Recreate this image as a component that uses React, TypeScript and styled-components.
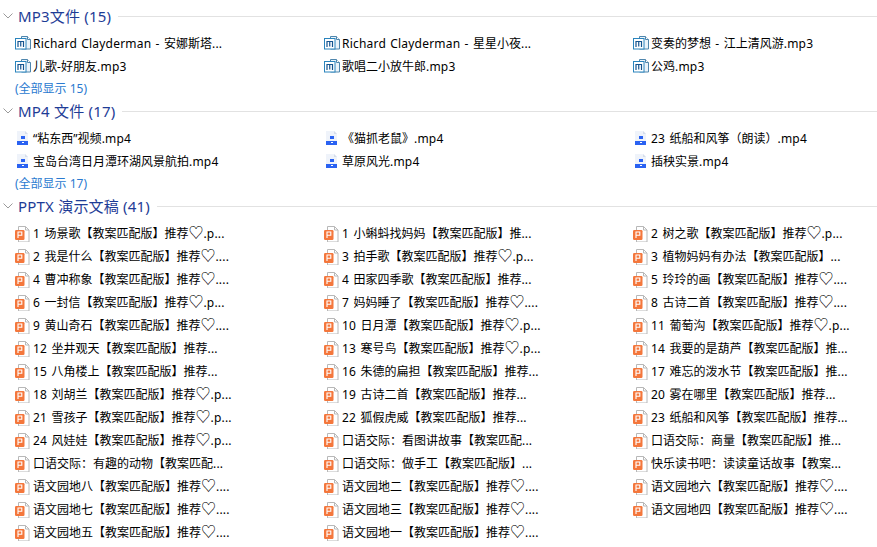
import styled, { createGlobalStyle } from "styled-components";

const mp3Files = [
  "Richard Clayderman - 安娜斯塔...",
  "Richard Clayderman - 星星小夜...",
  "变奏的梦想 - 江上清风游.mp3",
  "儿歌-好朋友.mp3",
  "歌唱二小放牛郎.mp3",
  "公鸡.mp3",
];

const mp4Files = [
  "“粘东西”视频.mp4",
  "《猫抓老鼠》.mp4",
  "23 纸船和风筝（朗读）.mp4",
  "宝岛台湾日月潭环湖风景航拍.mp4",
  "草原风光.mp4",
  "插秧实景.mp4",
];

const pptxFiles = [
  "1 场景歌【教案匹配版】推荐♡.p...",
  "1 小蝌蚪找妈妈【教案匹配版】推...",
  "2 树之歌【教案匹配版】推荐♡.p...",
  "2 我是什么【教案匹配版】推荐♡....",
  "3 拍手歌【教案匹配版】推荐♡.p...",
  "3 植物妈妈有办法【教案匹配版】...",
  "4 曹冲称象【教案匹配版】推荐♡....",
  "4 田家四季歌【教案匹配版】推荐...",
  "5 玲玲的画【教案匹配版】推荐♡....",
  "6 一封信【教案匹配版】推荐♡.p...",
  "7 妈妈睡了【教案匹配版】推荐♡....",
  "8 古诗二首【教案匹配版】推荐♡....",
  "9 黄山奇石【教案匹配版】推荐♡....",
  "10 日月潭【教案匹配版】推荐♡.p...",
  "11 葡萄沟【教案匹配版】推荐♡.p...",
  "12 坐井观天【教案匹配版】推荐...",
  "13 寒号鸟【教案匹配版】推荐♡.p...",
  "14 我要的是葫芦【教案匹配版】推...",
  "15 八角楼上【教案匹配版】推荐...",
  "16 朱德的扁担【教案匹配版】推荐...",
  "17 难忘的泼水节【教案匹配版】推...",
  "18 刘胡兰【教案匹配版】推荐♡.p...",
  "19 古诗二首【教案匹配版】推荐...",
  "20 雾在哪里【教案匹配版】推荐...",
  "21 雪孩子【教案匹配版】推荐♡.p...",
  "22 狐假虎威【教案匹配版】推荐...",
  "23 纸船和风筝【教案匹配版】推荐...",
  "24 风娃娃【教案匹配版】推荐♡.p...",
  "口语交际：看图讲故事【教案匹配...",
  "口语交际：商量【教案匹配版】推...",
  "口语交际：有趣的动物【教案匹配...",
  "口语交际：做手工【教案匹配版】...",
  "快乐读书吧：读读童话故事【教案...",
  "语文园地八【教案匹配版】推荐♡....",
  "语文园地二【教案匹配版】推荐♡....",
  "语文园地六【教案匹配版】推荐♡....",
  "语文园地七【教案匹配版】推荐♡....",
  "语文园地三【教案匹配版】推荐♡....",
  "语文园地四【教案匹配版】推荐♡....",
  "语文园地五【教案匹配版】推荐♡....",
  "语文园地一【教案匹配版】推荐♡....",
];

type FileKind = "mp3" | "mp4" | "pptx";

const FileIcon = ({ kind }: { kind: FileKind }) => {
  if (kind === "mp3") {
    return (
      <svg width="18" height="18" viewBox="0 0 18 18">
        <path d="M6.500 2.500h6l3 3v9.500h-9z" fill="#eaf3fa" stroke="#4f86ad" />
        <path d="M12.500 2.500v3h3" fill="#fff" stroke="#4f86ad" />
        <rect x="0.500" y="4.500" width="10.500" height="10.500" fill="#fff" stroke="#2a84bd" />
        <path d="M3 13v-5.500h5.500v5.500M5.750 7.500v5" fill="none" stroke="#14548f" strokeWidth="1.200" />
      </svg>
    );
  }
  if (kind === "mp4") {
    return (
      <svg width="18" height="18" viewBox="0 0 18 18">
        <path d="M2 2h8l3 3v11h-11z" fill="#eff3fa" />
        <path d="M10 2v3h3z" fill="#d6deeb" />
        <rect x="6" y="7" width="4" height="3" fill="#2a62f2" />
        <rect x="2" y="12" width="11" height="4" fill="#2a62f2" />
        <rect x="7" y="13" width="2" height="1" fill="#fff" />
      </svg>
    );
  }
  return (
    <svg width="18" height="18" viewBox="0 0 18 18">
      <path d="M3.500 2.500h7l3.500 3.500v12h-10.500z" fill="#fff" stroke="#b8b8b8" />
      <path d="M10.500 2.500v3.500h3.500" fill="none" stroke="#b8b8b8" />
      <rect x="0" y="6" width="9.500" height="10" rx="1.200" fill="#f4773c" />
      <path d="M3 14v-6h3.800v3.200h-3.800" fill="none" stroke="#fff" strokeWidth="1.100" />
    </svg>
  );
};

const Chevron = () => (
  <svg width="10" height="6" viewBox="0 0 10 6">
    <path d="M0.5 0.5l4.5 4.5 4.5-4.5" fill="none" stroke="#9a9a9a" />
  </svg>
);

// 라틴 문자와 하트만 폭이 달라서 조각으로 나눠 렌더링
const renderName = (name: string) =>
  name.split(/(♡|[A-Za-z0-9 .\-]+)/).map((part, i) => {
    if (!part) return null;
    if (part === "♡") return <Heart key={i}>♡</Heart>;
    if (/^[A-Za-z0-9 .\-]+$/.test(part)) return <Latin key={i}>{part}</Latin>;
    return part;
  });

interface SectionProps {
  title: string;
  kind: FileKind;
  files: string[];
  showAll?: number;
}

const Section = ({ title, kind, files, showAll }: SectionProps) => (
  <section>
    <Header>
      <Chevron />
      <Title>{title}</Title>
      <Rule />
    </Header>
    <FileGrid>
      {files.map((name) => (
        <FileItem key={name}>
          <IconSlot>
            <FileIcon kind={kind} />
          </IconSlot>
          <FileName>{renderName(name)}</FileName>
        </FileItem>
      ))}
    </FileGrid>
    {showAll && <ShowAll>(全部显示 {showAll})</ShowAll>}
  </section>
);

const App = () => (
  <>
    <GlobalStyle />
    <Page>
      <Section title="MP3文件 (15)" kind="mp3" files={mp3Files} showAll={15} />
      <Section title="MP4 文件 (17)" kind="mp4" files={mp4Files} showAll={17} />
      <Section title="PPTX 演示文稿 (41)" kind="pptx" files={pptxFiles} />
    </Page>
  </>
);

export default App;

const GlobalStyle = createGlobalStyle`
  html, body {
    margin: 0;
    background: #fff;
  }
`;

const Page = styled.div`
  height: 547px;
  overflow: hidden;
  padding-top: 4px;
  box-sizing: border-box;
  font-family: "Noto Sans", "Noto Sans CJK SC", sans-serif;
`;

const Header = styled.div`
  display: flex;
  align-items: center;
  height: 24px;
  padding-left: 3px;
`;

const Title = styled.h2`
  margin: 0 7px 0 5px;
  padding-bottom: 2px;
  color: #1e3c96;
  font-size: 15px;
  font-weight: 400;
  letter-spacing: 0.2px;
  white-space: nowrap;
`;

const Rule = styled.div`
  flex: 1;
  height: 1px;
  background: #e2e2e2;
`;

const FileGrid = styled.div`
  display: grid;
  grid-template-columns: repeat(3, 309px);
  grid-auto-rows: 23px;
  padding: 3px 0 0 15px;
`;

const FileItem = styled.div`
  display: flex;
  align-items: center;
  min-width: 0;
`;

const IconSlot = styled.span`
  display: flex;
  flex: none;
  width: 18px;
`;

const FileName = styled.span`
  color: #000;
  font-size: 12px;
  white-space: nowrap;
`;

const Latin = styled.span`
  letter-spacing: 0.2px;
  word-spacing: 1px;
`;

const Heart = styled.span`
  font-size: 15px;
  line-height: 12px;
`;

const ShowAll = styled.div`
  height: 22px;
  padding-left: 15px;
  color: #2a7ad0;
  font-size: 12px;
  line-height: 24px;
`;
